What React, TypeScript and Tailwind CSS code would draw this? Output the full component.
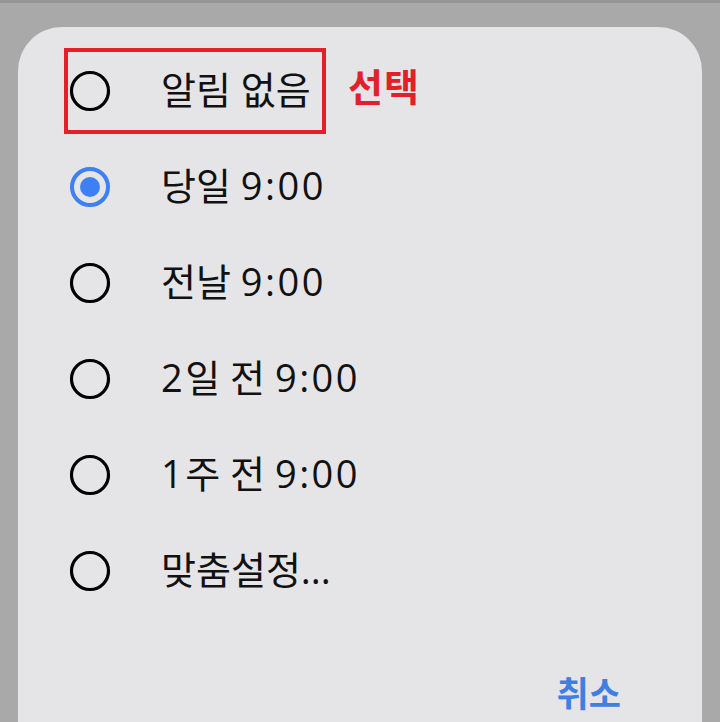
import React from "react";

const options = [
  { label: "알림 없음", selected: false },
  { label: "당일 9:00", selected: true },
  { label: "전날 9:00", selected: false },
  { label: "2일 전 9:00", selected: false },
  { label: "1주 전 9:00", selected: false },
  { label: "맞춤설정...", selected: false },
];

function Radio({ selected }: { selected: boolean }) {
  return (
    <svg width="44" height="44" viewBox="0 0 44 44" className="shrink-0">
      {selected ? (
        <>
          <circle cx="22" cy="22" r="18" fill="none" stroke="#3d7ff4" strokeWidth="4" />
          <circle cx="22" cy="22" r="10" fill="#3d7ff4" />
        </>
      ) : (
        <circle cx="22" cy="22" r="18.5" fill="none" stroke="#000" strokeWidth="3.2" />
      )}
    </svg>
  );
}

function Label({ text }: { text: string }) {
  const parts = text.split(/([0-9:]+)/);
  return (
    <>
      {parts.map((p, i) =>
        /^[0-9:]+$/.test(p) ? (
          <span key={i} className="tracking-[2.5px]">
            {p}
          </span>
        ) : (
          <span key={i}>{p}</span>
        )
      )}
    </>
  );
}

export default function App() {
  return (
    <div
      className="w-[720px] h-[722px] overflow-hidden bg-[#a9a9aa] flex flex-col"
      style={{ fontFamily: '"Open Sans", "Noto Sans CJK KR", sans-serif' }}
    >
      <div className="h-[3px] bg-[#959596] shrink-0" />
      <div className="mx-[18px] mt-[24px] flex-1 bg-[#e5e5e7] rounded-t-[44px] pt-[16px] flex flex-col">
        {options.map((o, i) => (
          <div key={i} className="relative h-[96px] flex items-center pl-[50px]">
            <Radio selected={o.selected} />
            <span className="ml-[49px] -mt-[4px] text-[38px] leading-none text-[#111] whitespace-nowrap">
              <Label text={o.label} />
            </span>
            {i === 0 && (
              <>
                <div className="absolute left-[46px] top-[5px] w-[262px] h-[86px] border-[4px] border-[#e3202a]" />
                <span
                  className="absolute left-[330px] top-[23px] text-[38px] leading-none font-bold text-[#e3202a] tracking-[1px]"
                  style={{ fontFamily: '"Noto Sans CJK KR", sans-serif' }}
                >
                  선택
                </span>
              </>
            )}
          </div>
        ))}
        <div className="flex justify-end pr-[81px] mt-[55px]">
          <span
            className="text-[35px] leading-none font-bold text-[#3f7fe2]"
            style={{ fontFamily: '"Noto Sans CJK KR", sans-serif' }}
          >
            취소
          </span>
        </div>
      </div>
    </div>
  );
}
